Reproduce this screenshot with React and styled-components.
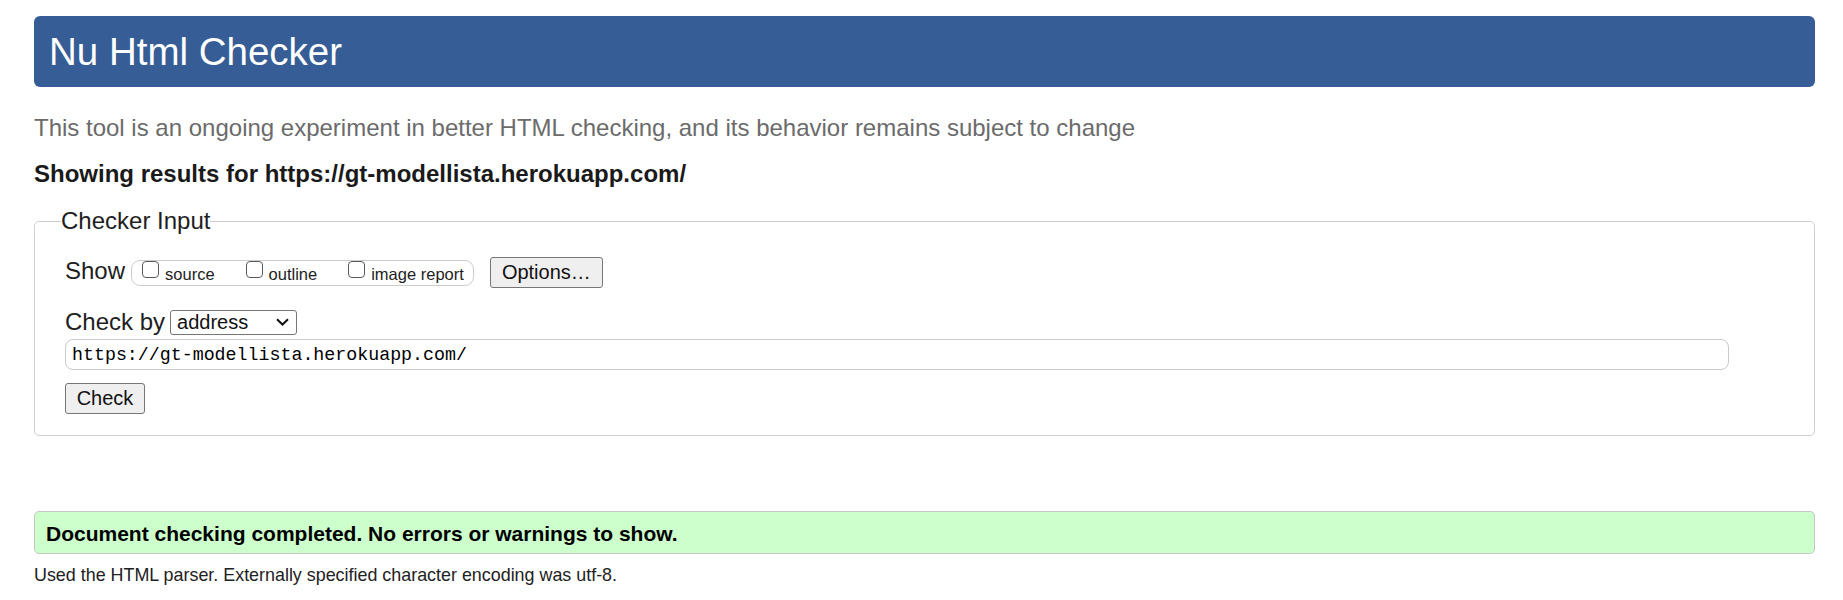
import React from "react";
import styled, { createGlobalStyle } from "styled-components";

const GlobalStyle = createGlobalStyle`
  html, body {
    margin: 0;
    padding: 0;
    background: #ffffff;
    font-family: "Liberation Sans", Arial, sans-serif;
    color: #1e1e1e;
  }
  * {
    box-sizing: border-box;
  }
`;

const Page = styled.div`
  padding: 16px 28px 20px 34px;
`;

const Title = styled.h1`
  margin: 0;
  height: 71px;
  line-height: 71px;
  padding: 0 15px;
  background: #365d95;
  color: #ffffff;
  font-size: 38.5px;
  font-weight: 400;
  border-radius: 6px;
`;

const Intro = styled.p`
  margin: 27px 0 0;
  font-size: 24px;
  line-height: 28px;
  color: #6b6b6b;
`;

const ResultsFor = styled.p`
  margin: 18px 0 0;
  font-size: 24px;
  line-height: 28px;
  font-weight: 700;
  color: #1a1a1a;
`;

const InputSet = styled.fieldset`
  margin: 20px 0 0;
  padding: 23px 30px 21px 30px;
  border: 1px solid #cfcfcf;
  border-radius: 5px;
  min-width: 0;
`;

const Legend = styled.legend`
  margin-left: -4px;
  padding: 0;
  font-size: 24px;
  line-height: 26px;
  color: #1e1e1e;
`;

const Row = styled.div`
  display: flex;
  align-items: center;
  height: ${(p) => p.$height}px;
  margin-top: ${(p) => p.$gap || 0}px;
`;

const RowLabel = styled.span`
  font-size: 24px;
  line-height: 28px;
  margin-bottom: ${(p) => p.$lift || 0}px;
  color: #1e1e1e;
`;

const OptionGroup = styled.div`
  display: flex;
  align-items: center;
  height: 26px;
  margin-left: 6px;
  padding: 0 9px 0 10px;
  border: 1px solid #cccccc;
  border-radius: 9px;
`;

const OptionItem = styled.label`
  display: flex;
  align-items: center;
  margin-right: ${(p) => (p.$last ? 0 : 31)}px;
`;

const Box = styled.input`
  -webkit-appearance: none;
  appearance: none;
  flex: none;
  width: 17px;
  height: 17px;
  margin: 0 6px 6px 0;
  border: 1.5px solid #5a5a5a;
  border-radius: 4px;
  background: #ffffff;
`;

const OptionText = styled.span`
  font-size: 16.5px;
  line-height: 20px;
  margin-top: 3px;
  color: #1e1e1e;
`;

const Button = styled.button`
  width: ${(p) => p.$width}px;
  height: 31px;
  margin-left: ${(p) => p.$left || 0}px;
  padding: 0;
  font-family: "Liberation Sans", Arial, sans-serif;
  font-size: 20px;
  color: #111111;
  background: #efefef;
  border: 1px solid #767676;
  border-radius: 3px;
`;

const Select = styled.div`
  display: flex;
  align-items: center;
  width: 127px;
  height: 25px;
  margin-left: 5px;
  padding: 0 7px 0 6px;
  border: 1px solid #767676;
  border-radius: 3px;
  background: #ffffff;
  font-size: 20px;
  color: #111111;
  svg {
    margin-left: auto;
  }
`;

const UrlField = styled.input`
  display: block;
  width: calc(100% - 55px);
  height: 31px;
  margin-top: 3px;
  padding: 0 6px;
  border: 1px solid #cacaca;
  border-radius: 8px;
  font-family: "Liberation Mono", "DejaVu Sans Mono", monospace;
  font-size: 18.3px;
  color: #000000;
  background: #ffffff;
  outline: none;
`;

const CheckRow = styled.div`
  margin-top: 13px;
`;

const Success = styled.div`
  margin-top: 75px;
  padding: 2px 11px 0;
  line-height: 39px;
  background: #ccffcc;
  border: 1px solid #c6c6c6;
  border-radius: 5px;
  font-size: 21px;
  font-weight: 700;
  color: #000000;
`;

const Note = styled.p`
  margin: 11px 0 0;
  font-size: 17.9px;
  line-height: 20px;
  color: #222222;
`;

const Chevron = () => (
  <svg width="13" height="8" viewBox="0 0 13 8">
    <path d="M1 1.2 L6.5 6.5 L12 1.2" fill="none" stroke="#111" strokeWidth="2" />
  </svg>
);

const options = ["source", "outline", "image report"];

export default function App() {
  return (
    <>
      <GlobalStyle />
      <Page>
        <Title>Nu Html Checker</Title>
        <Intro>
          This tool is an ongoing experiment in better HTML checking, and its behavior remains subject to change
        </Intro>
        <ResultsFor>Showing results for https://gt-modellista.herokuapp.com/</ResultsFor>

        <InputSet>
          <Legend>Checker Input</Legend>
          <Row $height={31}>
            <RowLabel $lift={4}>Show</RowLabel>
            <OptionGroup>
              {options.map((o, i) => (
                <OptionItem key={o} $last={i === options.length - 1}>
                  <Box type="checkbox" />
                  <OptionText>{o}</OptionText>
                </OptionItem>
              ))}
            </OptionGroup>
            <Button $width={113} $left={16}>Options…</Button>
          </Row>
          <Row $height={28} $gap={20}>
            <RowLabel>Check by</RowLabel>
            <Select>
              address
              <Chevron />
            </Select>
          </Row>
          <UrlField readOnly value="https://gt-modellista.herokuapp.com/" />
          <CheckRow>
            <Button $width={80}>Check</Button>
          </CheckRow>
        </InputSet>

        <Success>Document checking completed. No errors or warnings to show.</Success>
        <Note>Used the HTML parser. Externally specified character encoding was utf-8.</Note>
      </Page>
    </>
  );
}
